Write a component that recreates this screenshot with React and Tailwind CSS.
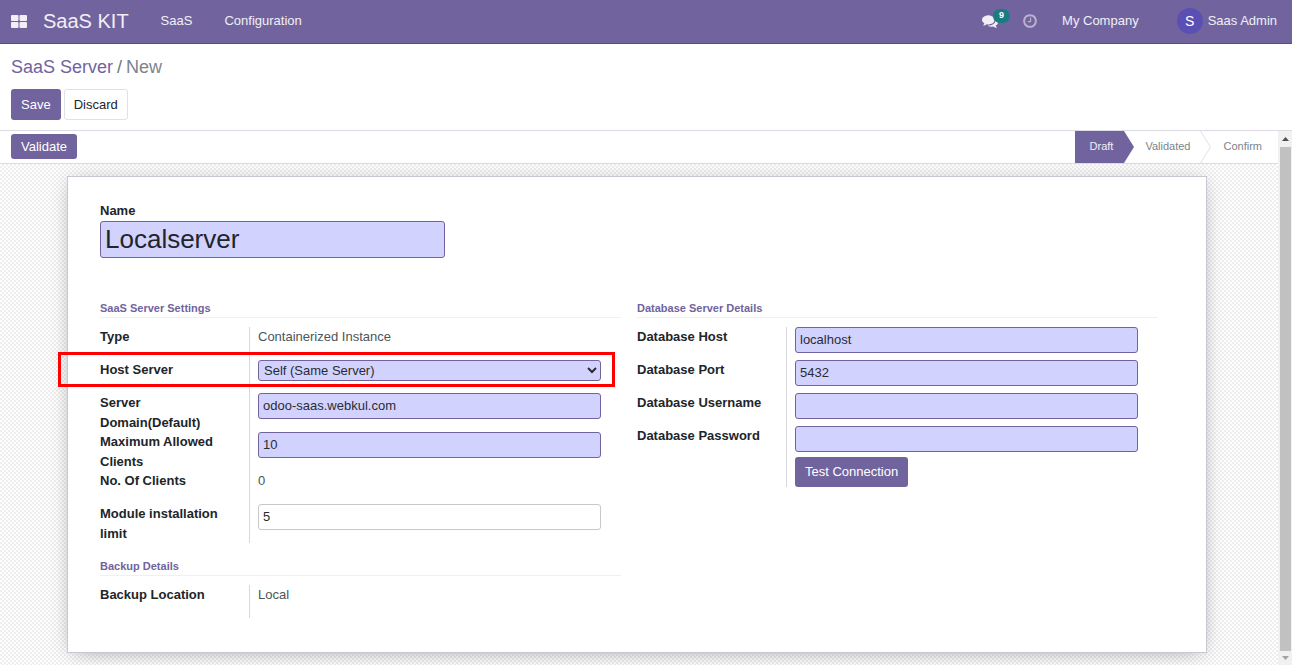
import clsx from 'clsx'

const inputClass =
  'block h-[26px] w-full rounded-[3px] border px-1 pb-0.5 text-[13px] text-[#2b2b33] outline-none'

function AppsIcon() {
  return (
    <svg width="16" height="14" viewBox="0 0 16 14" fill="currentColor" aria-hidden="true">
      <rect x="0" y="1" width="7.500" height="6" rx="1" />
      <rect x="8.500" y="1" width="7.500" height="6" rx="1" />
      <rect x="0" y="8" width="7.500" height="6" rx="1" />
      <rect x="8.500" y="8" width="7.500" height="6" rx="1" />
    </svg>
  )
}

function CommentsIcon() {
  return (
    <svg width="16" height="16" viewBox="0 0 1792 1792" fill="currentColor" aria-hidden="true">
      <path d="M1408 768q0 139-94 257t-256.500 186.500-353.500 68.500q-86 0-176-16-124 88-278 128-36 9-86 16h-3q-11 0-20.500-8t-11.500-21q-1-3-1-6.500t0.500-6.500 2-6l2.500-5t3.500-5.500 4-5 4.500-5 4-4.500q5-6 23-25t26-29.500 22.500-29 25-38.500 20.500-44q-124-72-195-177t-71-224q0-139 94-257t256.500-186.500 353.500-68.500 353.500 68.500 256.500 186.500 94 257zm384 256q0 120-71 224.500t-195 176.500q10 24 20.500 44t25 38.500 22.500 29 26 29.500 23 25q1 1 4 4.500t4.500 5 4 5 3.500 5.500l2.500 5t2 6 .5 6.500-1 6.500q-3 14-13 22t-22 7q-50-7-86-16-154-40-278-128-90 16-176 16-271 0-472-132 58 4 88 4 161 0 309-45t264-129q125-92 192-212t67-257q0-77-23-152 129 71 204 178t75 230z" />
    </svg>
  )
}

function ClockIcon() {
  return (
    <svg width="16" height="16" viewBox="0 0 1792 1792" fill="currentColor" aria-hidden="true">
      <path d="M1024 544v448q0 14-9 23t-23 9h-320q-14 0-23-9t-9-23v-64q0-14 9-23t23-9h224v-352q0-14 9-23t23-9h64q14 0 23 9t9 23zm416 352q0-148-73-273t-198-198-273-73-273 73-198 198-73 273 73 273 198 198 273 73 273-73 198-198 73-273zm224 0q0 209-103 385.500t-279.500 279.500-385.500 103-385.500-103-279.500-279.500-103-385.500 103-385.500 279.500-279.500 385.500-103 385.500 103 279.500 279.500 103 385.500z" />
    </svg>
  )
}

function Navbar() {
  return (
    <header className="flex h-11 shrink-0 items-center border-b border-[#5a4f7f] bg-[#71639e] pr-[15px] pb-0.5 pl-[11px] text-white/90">
      <button type="button" aria-label="Apps">
        <AppsIcon />
      </button>
      <a href="#" className="ml-4 text-xl">SaaS KIT</a>
      <nav className="ml-8 flex gap-8">
        <a href="#">SaaS</a>
        <a href="#">Configuration</a>
      </nav>
      <div className="ml-auto flex items-center">
        <button type="button" aria-label="Messages" className="relative">
          <CommentsIcon />
          <span className="absolute -top-1 left-[11px] flex h-[14px] w-[17px] items-center justify-center rounded-full bg-[#1b7c80] text-[9px] font-bold text-white">
            9
          </span>
        </button>
        <button type="button" aria-label="Activities" className="ml-6 text-white/50">
          <ClockIcon />
        </button>
        <button type="button" className="ml-6">My Company</button>
        <button type="button" className="ml-[38px] flex items-center gap-[5px]">
          <span className="flex size-[26px] items-center justify-center rounded-full bg-[#5b4fb3] text-sm text-white">
            S
          </span>
          Saas Admin
        </button>
      </div>
    </header>
  )
}

function ControlPanel() {
  return (
    <div className="shrink-0 border-b border-[#dcdbe3] px-[11px] pt-[11px] pb-[10px]">
      <nav aria-label="Breadcrumb" className="flex gap-1 text-lg leading-6 text-[#71639e]">
        <a href="#">SaaS Server</a>
        <span className="text-[#6c757d]">/</span>
        <span className="text-[#7b858c]">New</span>
      </nav>
      <div className="mt-[10px] flex gap-[3px]">
        <button type="button" className="h-[31px] rounded-[3px] bg-[#71639e] px-[10px] text-white">
          Save
        </button>
        <button
          type="button"
          className="h-[31px] rounded-[3px] border border-[#dee2e6] bg-white px-[9px] text-[#212529]"
        >
          Discard
        </button>
      </div>
    </div>
  )
}

function StatusBar() {
  return (
    <div className="flex h-[33px] justify-between border-b border-[#dcdbe3] bg-white pl-[11px]">
      <div className="pt-[3px]">
        <button type="button" className="h-[25px] rounded-[3px] bg-[#71639e] px-[10px] text-white">
          Validate
        </button>
      </div>
      <div className="flex text-[11px] text-[#7b858c]">
        <button type="button" className="bg-[#71639e] pr-[11px] pb-0.5 pl-[15px] text-white/90">
          Draft
        </button>
        <svg width="10" height="32" viewBox="0 0 10 32" aria-hidden="true">
          <path d="M0 0L10 16L0 32Z" fill="#71639e" />
        </svg>
        <button type="button" className="pr-[10px] pb-0.5 pl-[11px]">Validated</button>
        <svg width="11" height="32" viewBox="0 0 11 32" fill="none" aria-hidden="true">
          <path d="M0.500 0L10.500 16L0.500 32" stroke="#dee2e6" />
        </svg>
        <button type="button" className="pr-4 pb-0.5 pl-3">Confirm</button>
      </div>
    </div>
  )
}

function Group({ title, children, className }) {
  return (
    <section className={clsx('pr-4', className)}>
      <h2 className="h-[18px] border-b border-[#f0f0f2] text-[11px] leading-4 font-bold text-[#71639e]">
        {title}
      </h2>
      <div className="mt-[9px]">{children}</div>
    </section>
  )
}

function Field({ label, id, children, highlight }) {
  return (
    <div className="relative flex min-h-[33px]">
      <div className="w-[150px] shrink-0 border-r border-[#d8d8dc] pr-6 font-bold text-[#212529]">
        {id ? <label htmlFor={id}>{label}</label> : label}
      </div>
      <div className="flex min-w-0 flex-1 flex-col items-start gap-[5px] pr-5 pl-2 text-[#4c555a]">
        {children}
      </div>
      {highlight && (
        <div className="pointer-events-none absolute top-[-8px] right-[6px] bottom-[6px] left-[-42px] border-3 border-[#ff0000]" />
      )}
    </div>
  )
}

function TextInput({ required, ...props }) {
  return (
    <input
      className={clsx(
        inputClass,
        required ? 'border-[#71639e] bg-[#d2d2ff]' : 'border-[#c8c8cc] bg-white'
      )}
      required={required}
      {...props}
    />
  )
}

function Scrollbar() {
  return (
    <div className="flex w-[14px] shrink-0 flex-col items-center bg-[#f1f1f1]" aria-hidden="true">
      <svg width="14" height="16" viewBox="0 0 14 16">
        <path d="M4 10L7.500 6L11 10Z" fill="#505050" />
      </svg>
      <div className="ml-px w-[11px] flex-1 bg-[#c1c1c1]" />
      <svg width="14" height="14" viewBox="0 0 14 14">
        <path d="M4 5L7.500 9L11 5Z" fill="#a3a3a3" />
      </svg>
    </div>
  )
}

export default function App() {
  return (
    <div className="flex h-screen flex-col overflow-hidden bg-white font-['Liberation_Sans',Arial,sans-serif] text-[13px] leading-normal">
      <Navbar />
      <ControlPanel />
      <div className="flex min-h-0 flex-1">
        <main className="min-w-0 flex-1 overflow-hidden">
          <StatusBar />
          <div className="min-h-full bg-[repeating-conic-gradient(#eeeeee_0_25%,#ffffff_0_50%)] bg-[length:4px_4px] pt-3 pr-1 pb-3">
            <form
              className="mx-auto max-w-[1140px] border border-[#c8c8d3] bg-white px-8 pt-6 pb-[34px] shadow-[0_5px_20px_-15px_rgba(0,0,0,0.4),0_2px_20px_-2px_rgba(0,0,0,0.2)]"
              onSubmit={(e) => e.preventDefault()}
            >
              <label htmlFor="name" className="block h-5 font-bold text-[#212529]">Name</label>
              <input
                id="name"
                required
                defaultValue="Localserver"
                className="block h-[37px] w-[345px] rounded-[3px] border border-[#71639e] bg-[#d2d2ff] px-1 text-[26px] text-[#212529] outline-none"
              />
              <div className="mt-[42px] grid grid-cols-2">
                <div>
                  <Group title="SaaS Server Settings">
                    <Field label="Type">Containerized Instance</Field>
                    <Field label="Host Server" id="host" highlight>
                      <select
                        id="host"
                        className="block h-[21px] w-full rounded-[3px] border border-[#71639e] bg-[#d2d2ff] px-px text-[13px] text-[#2b2b33] outline-none"
                      >
                        <option>Self (Same Server)</option>
                      </select>
                    </Field>
                    <Field label="Server Domain(Default)" id="domain">
                      <TextInput id="domain" required defaultValue="odoo-saas.webkul.com" />
                    </Field>
                    <Field label="Maximum Allowed Clients" id="max-clients">
                      <TextInput id="max-clients" required defaultValue="10" />
                    </Field>
                    <Field label="No. Of Clients">0</Field>
                    <Field label="Module installation limit" id="module-limit">
                      <TextInput id="module-limit" defaultValue="5" />
                    </Field>
                  </Group>
                  <Group title="Backup Details" className="mt-[15px]">
                    <Field label="Backup Location">Local</Field>
                  </Group>
                </div>
                <Group title="Database Server Details">
                  <Field label="Database Host" id="db-host">
                    <TextInput id="db-host" required defaultValue="localhost" />
                  </Field>
                  <Field label="Database Port" id="db-port">
                    <TextInput id="db-port" required defaultValue="5432" />
                  </Field>
                  <Field label="Database Username" id="db-user">
                    <TextInput id="db-user" required />
                  </Field>
                  <Field label="Database Password" id="db-password">
                    <TextInput id="db-password" type="password" required />
                    <button
                      type="button"
                      className="h-[30px] rounded-[3px] bg-[#71639e] px-[10px] text-white"
                    >
                      Test Connection
                    </button>
                  </Field>
                </Group>
              </div>
            </form>
          </div>
        </main>
        <Scrollbar />
      </div>
    </div>
  )
}
